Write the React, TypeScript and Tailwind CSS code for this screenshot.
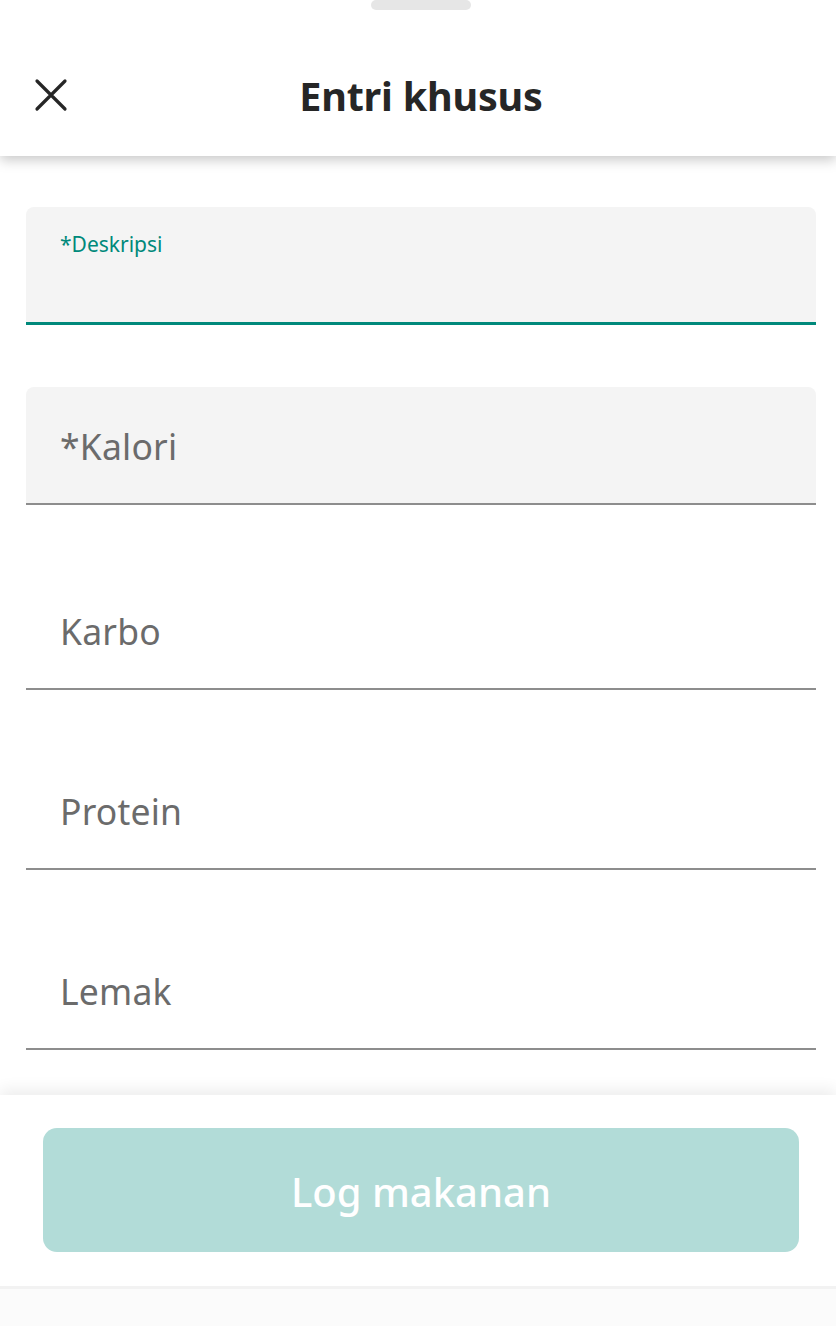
import React from "react";

const font = { fontFamily: '"Noto Sans", "Open Sans", sans-serif' };

function Field({ label, filled, active }: { label: string; filled?: boolean; active?: boolean }) {
  return (
    <div
      className={`ml-[26px] mr-[20px] h-[118px] flex flex-col ${filled ? "bg-[#f4f4f4] rounded-t-[8px]" : ""} ${
        active ? "border-b-[3px] border-[#00897b]" : "border-b-2 border-[#8d8d8d]"
      }`}
    >
      {active ? (
        <div className="pl-[34px] pt-[22px] text-[21px] leading-[30px] text-[#00897b]">{label}</div>
      ) : (
        <div className="pl-[34px] pt-[4px] flex-1 flex items-center text-[35.5px] text-[#6b6b6b] tracking-[0.2px]">{label}</div>
      )}
    </div>
  );
}

export default function App() {
  return (
    <div className="w-[836px] h-[1326px] bg-white flex flex-col overflow-hidden" style={font}>
      <div className="relative h-[156px] bg-white shadow-[0_4px_12px_rgba(0,0,0,0.22)] z-10 flex items-center">
        <div className="absolute top-0 left-[371px] w-[100px] h-[10px] bg-[#e6e6e6] rounded-full" />
        <svg className="absolute left-[33px] top-[77px]" width="36" height="36" viewBox="0 0 36 36">
          <path d="M4 4 L32 32 M32 4 L4 32" stroke="#262626" strokeWidth="3.2" strokeLinecap="round" />
        </svg>
        <div className="w-full text-center text-[39.5px] font-bold text-[#262626] pt-[37px] pl-[6px] tracking-[-0.2px]">Entri khusus</div>
      </div>
      <div className="flex-1 flex flex-col pt-[51px]">
        <Field label="*Deskripsi" filled active />
        <div className="h-[62px]" />
        <Field label="*Kalori" filled />
        <div className="h-[67px]" />
        <Field label="Karbo" />
        <div className="h-[62px]" />
        <Field label="Protein" />
        <div className="h-[62px]" />
        <Field label="Lemak" />
      </div>
      <div className="relative h-[231px] bg-white shadow-[0_-6px_14px_rgba(0,0,0,0.07)] flex flex-col">
        <div className="pl-[43px] pr-[37px] pt-[33px]">
          <div className="h-[124px] rounded-[14px] bg-[#b2dcd8] flex items-center justify-center text-white text-[40px] font-medium pt-[3px]">
            Log makanan
          </div>
        </div>
        <div className="mt-[34px] flex-1 bg-[#fbfbfb] border-t-[3px] border-[#f2f2f2]" />
      </div>
    </div>
  );
}
